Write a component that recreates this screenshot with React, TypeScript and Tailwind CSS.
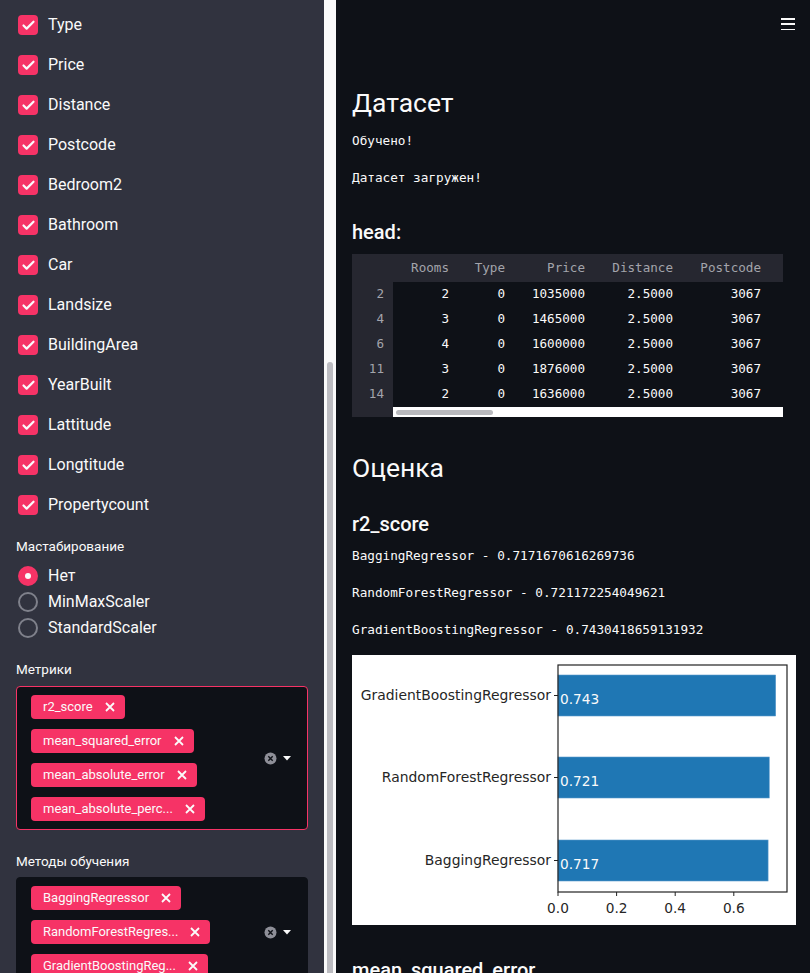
import { Check } from 'lucide-react';

const sans = { fontFamily: 'Roboto, "Noto Sans", sans-serif' };
const mono = { fontFamily: '"DejaVu Sans Mono", "Liberation Mono", monospace' };

const columns = [
  'Type',
  'Price',
  'Distance',
  'Postcode',
  'Bedroom2',
  'Bathroom',
  'Car',
  'Landsize',
  'BuildingArea',
  'YearBuilt',
  'Lattitude',
  'Longtitude',
  'Propertycount',
];

const rows = [
  ['2', '2', '0', '1035000', '2.5000', '3067'],
  ['4', '3', '0', '1465000', '2.5000', '3067'],
  ['6', '4', '0', '1600000', '2.5000', '3067'],
  ['11', '3', '0', '1876000', '2.5000', '3067'],
  ['14', '2', '0', '1636000', '2.5000', '3067'],
];

const colWidths = ['w-[65px]', 'w-[56px]', 'w-[80px]', 'w-[88px]', 'w-[101px] pr-[22px]'];

function Tag({ label }: { label: string }) {
  return (
    <div className="flex h-6 w-max items-center gap-[12px] rounded-[4px] bg-[#f63366] pl-3 pr-[10px] text-[13px] text-[#fafafa]">
      <span>{label}</span>
      <svg width="10" height="10" viewBox="0 0 10 10" className="shrink-0">
        <path d="M1 1 L9 9 M9 1 L1 9" stroke="#fafafa" strokeWidth="1.8" />
      </svg>
    </div>
  );
}

function MultiSelect({ tags, focused }: { tags: string[]; focused?: boolean }) {
  return (
    <div
      className={`flex items-center rounded-[4px] border bg-[#0e1117] py-2 pl-[14px] pr-4 ${
        focused ? 'border-[#f63366]' : 'border-[#0e1117]'
      }`}
    >
      <div className="flex grow flex-col gap-[10px]">
        {tags.map((t) => (
          <Tag key={t} label={t} />
        ))}
      </div>
      <div className="flex items-center gap-[6px]">
        <svg width="13" height="13" viewBox="0 0 13 13">
          <circle cx="6.5" cy="6.5" r="6" fill="#8e8f98" />
          <path d="M4.3 4.3 L8.7 8.7 M8.7 4.3 L4.3 8.7" stroke="#0e1117" strokeWidth="1.4" />
        </svg>
        <svg width="8" height="5" viewBox="0 0 8 5">
          <path d="M0 0 L8 0 L4 4.5 Z" fill="#fafafa" />
        </svg>
      </div>
    </div>
  );
}

function Sidebar() {
  return (
    <aside className="h-full w-[324px] shrink-0 overflow-hidden bg-[#31333f] px-4 pt-[5px] text-[#fafafa]" style={sans}>
      {columns.map((c) => (
        <div key={c} className="flex h-10 items-center gap-[10px] pl-[2px]">
          <span className="flex h-5 w-5 items-center justify-center rounded-[4px] bg-[#f63366]">
            <Check size={15} strokeWidth={3.5} color="#fafafa" />
          </span>
          <span className="text-[16px]">{c}</span>
        </div>
      ))}
      <div className="mt-[11px] h-5 text-[13.5px] leading-5">Мастабирование</div>
      <div className="mt-[7px]">
        {['Нет', 'MinMaxScaler', 'StandardScaler'].map((r, i) => (
          <div key={r} className="flex h-[26px] items-center gap-[10px] pl-[2px]">
            {i === 0 ? (
              <span className="flex h-5 w-5 items-center justify-center rounded-full bg-[#f63366]">
                <span className="h-[6px] w-[6px] rounded-full bg-[#fafafa]" />
              </span>
            ) : (
              <span className="h-5 w-5 rounded-full border-2 border-[#7f818b]" />
            )}
            <span className="text-[16px]">{r}</span>
          </div>
        ))}
      </div>
      <div className="mt-[18px] h-5 text-[13.5px] leading-5">Метрики</div>
      <div className="mt-[7px]">
        <MultiSelect
          focused
          tags={['r2_score', 'mean_squared_error', 'mean_absolute_error', 'mean_absolute_perc...']}
        />
      </div>
      <div className="mt-[21px] h-5 text-[13.5px] leading-5">Методы обучения</div>
      <div className="mt-[6px]">
        <MultiSelect tags={['BaggingRegressor', 'RandomForestRegres...', 'GradientBoostingReg...']} />
      </div>
    </aside>
  );
}

function DataTable() {
  return (
    <div className="w-max bg-[#262730] text-[12.6px]" style={mono}>
      <div className="flex h-[28px] items-center text-[#a3a4ab]">
        <div className="w-[41px]" />
        {['Rooms', 'Type', 'Price', 'Distance', 'Postcode'].map((h, i) => (
          <div key={h} className={`${colWidths[i]} pr-[9px] text-right`}>
            {h}
          </div>
        ))}
      </div>
      {rows.map((r) => (
        <div key={r[0]} className="flex h-[25px] items-center">
          <div className="w-[41px] pr-[9px] text-right text-[#a3a4ab]">{r[0]}</div>
          {r.slice(1).map((v, i) => (
            <div
              key={i}
              className={`${colWidths[i]} flex h-full items-center justify-end bg-[#0e1117] pr-[9px] text-[#fafafa]`}
            >
              {v}
            </div>
          ))}
        </div>
      ))}
      <div className="flex h-[10px]">
        <div className="w-[41px]" />
        <div className="flex w-[390px] items-center bg-white pl-[3px]">
          <div className="h-[5px] w-[97px] rounded-full bg-[#b9babe]" />
        </div>
      </div>
    </div>
  );
}

function Chart() {
  const left = 206;
  const scale = 293;
  const bars = [
    { name: 'GradientBoostingRegressor', v: 0.743, y: 20 },
    { name: 'RandomForestRegressor', v: 0.721, y: 102 },
    { name: 'BaggingRegressor', v: 0.717, y: 185 },
  ];
  return (
    <div className="h-[270px] w-[444px] bg-white">
      <svg width="444" height="270" viewBox="0 0 444 270" style={{ fontFamily: '"DejaVu Sans", sans-serif' }}>
        {bars.map((b) => (
          <g key={b.name}>
            <rect x={left} y={b.y} width={b.v * scale} height={41} fill="#1f77b4" stroke="#5d9ccc" strokeWidth="0.6" />
            <line x1={left - 4} x2={left} y1={b.y + 20.5} y2={b.y + 20.5} stroke="#222" strokeWidth="1" />
            <text x={left - 7} y={b.y + 25} textAnchor="end" fontSize="13.9" fill="#262626">
              {b.name}
            </text>
            <text x={left + 2} y={b.y + 29} fontSize="13.7" fill="#fafafa">
              {b.v.toFixed(3)}
            </text>
          </g>
        ))}
        <rect x={left} y={10} width={229} height={227} fill="none" stroke="#222" strokeWidth="1.2" />
        {[0, 0.2, 0.4, 0.6].map((t) => (
          <g key={t}>
            <line x1={left + t * scale} x2={left + t * scale} y1={237} y2={241} stroke="#222" strokeWidth="1" />
            <text x={left + t * scale} y={258} textAnchor="middle" fontSize="13.7" fill="#262626">
              {t.toFixed(1)}
            </text>
          </g>
        ))}
      </svg>
    </div>
  );
}

export default function App() {
  return (
    <div className="flex h-[973px] w-[810px] overflow-hidden bg-[#0e1117]">
      <Sidebar />
      <div className="relative h-full w-3 shrink-0 bg-[#fafafa]">
        <div className="absolute left-[3px] top-[362px] h-[640px] w-[6px] rounded-full bg-[#bcbcc1]" />
      </div>
      <main className="relative h-full grow overflow-hidden pl-4 pt-[83px] text-[#fafafa]" style={sans}>
        <button className="absolute right-[15px] top-[17px] flex h-[14px] w-[14px] flex-col justify-between py-[1px]">
          <span className="h-[1.5px] w-full bg-[#fafafa]" />
          <span className="h-[1.5px] w-full bg-[#fafafa]" />
          <span className="h-[1.5px] w-full bg-[#fafafa]" />
        </button>
        <h1 className="h-10 text-[26.5px] leading-10">Датасет</h1>
        <p className="mt-2 h-5 text-[12.7px] leading-5" style={mono}>
          Обучено!
        </p>
        <p className="mt-[17px] h-5 text-[12.7px] leading-5" style={mono}>
          Датасет загружен!
        </p>
        <h3 className="mt-[30px] h-7 text-[20px] font-medium leading-7">head:</h3>
        <div className="mt-2">
          <DataTable />
        </div>
        <h1 className="mt-[31px] h-10 text-[26.5px] leading-10">Оценка</h1>
        <h3 className="mt-[22px] h-7 text-[20px] font-medium leading-7">r2_score</h3>
        <p className="mt-2 h-5 text-[12.7px] leading-5" style={mono}>
          BaggingRegressor - 0.7171670616269736
        </p>
        <p className="mt-[17px] h-5 text-[12.7px] leading-5" style={mono}>
          RandomForestRegressor - 0.721172254049621
        </p>
        <p className="mt-[17px] h-5 text-[12.7px] leading-5" style={mono}>
          GradientBoostingRegressor - 0.7430418659131932
        </p>
        <div className="mt-[15px]">
          <Chart />
        </div>
        <h3 className="mt-[31px] h-7 text-[20px] font-medium leading-7">mean_squared_error</h3>
      </main>
    </div>
  );
}
